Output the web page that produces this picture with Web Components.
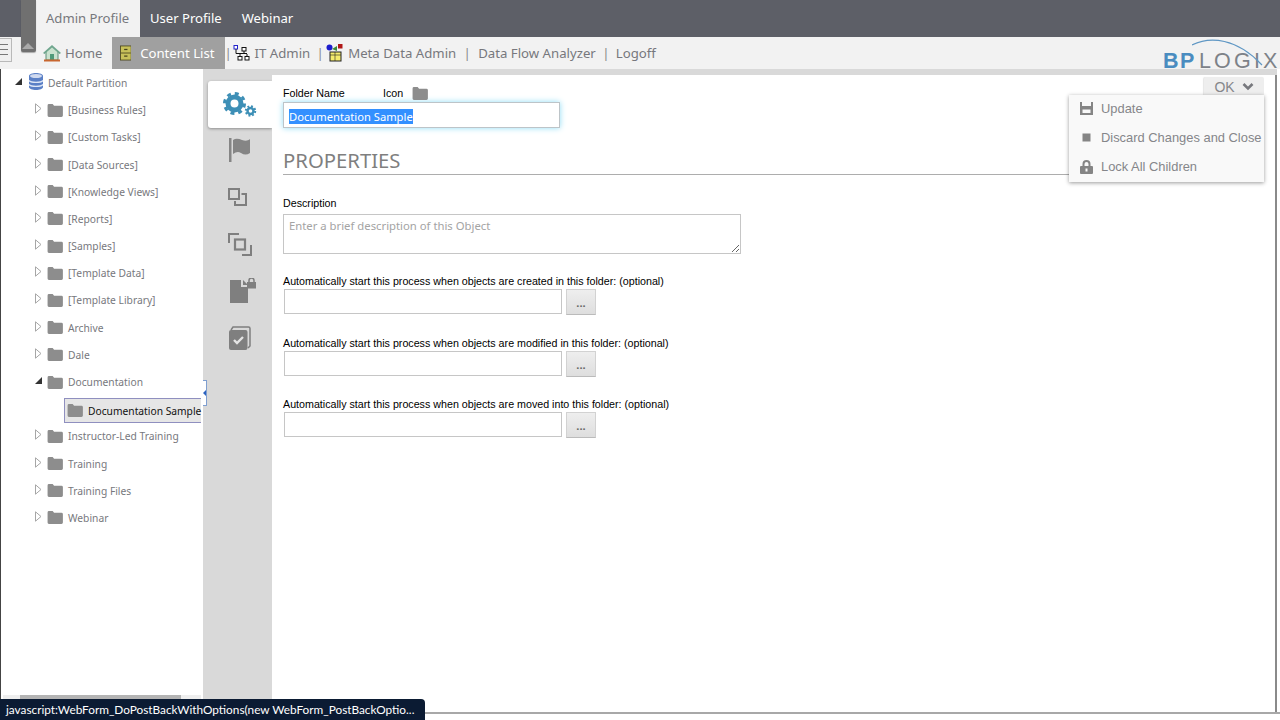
<!DOCTYPE html>
<html lang="en">
<head>
<meta charset="utf-8">
<title>Content List</title>
<style>
  html,body{margin:0;height:100%;background:#fff;overflow:hidden}
  body{font-family:"Noto Sans","Liberation Sans",sans-serif}
</style>
</head>
<body>
<app-shell></app-shell>
<script>
const UI = '"Noto Sans","Open Sans","Liberation Sans",sans-serif';
const folder = (w = 16, h = 13) => `<svg width="${w}" height="${h}" viewBox="0 0 17 14" style="display:block;flex:none"><path fill="#8d8d8d" d="M1.500 0h4.500l1.500 2h8a1.500 1.500 0 0 1 1.500 1.500v9a1.500 1.500 0 0 1-1.500 1.500h-13.500a1.500 1.500 0 0 1-1.500-1.500v-11a1.500 1.500 0 0 1 1.500-1.500z"/></svg>`;
const gear = (cx, cy, r, sw, tw) => {
  const R = r + sw / 2 + tw / 2 - .5, d = (2 * Math.PI * R) / 16;
  return `<circle cx="${cx}" cy="${cy}" r="${r}" fill="none" stroke="#3d8fb6" stroke-width="${sw}"/><circle cx="${cx}" cy="${cy}" r="${R}" fill="none" stroke="#3d8fb6" stroke-width="${tw}" stroke-dasharray="${d} ${d}"/>`;
};
const ICONS = {
  gears: `<svg width="34" height="26" viewBox="0 0 34 26">${gear(11.5, 12.5, 6.5, 5, 3)}${gear(27.5, 20, 3, 2.4, 2)}</svg>`,
  flag: `<svg width="22" height="24" viewBox="0 0 22 24"><rect x="0" y="0" width="2.500" height="24" fill="#858585"/><path fill="#858585" d="M4 2c3-2 6-1 9 0s6 1 8-1v14c-3 2-6 2-9 0s-5-1-8 1z"/></svg>`,
  one: `<svg width="19" height="18" viewBox="0 0 19 18" fill="none" stroke="#7f7f7f" stroke-width="2"><rect x="1" y="1" width="10" height="10"/><path d="M13.500 6h4.500v11h-11v-4"/></svg>`,
  many: `<svg width="24" height="23" viewBox="0 0 24 23" fill="none" stroke="#7f7f7f" stroke-width="2"><path d="M1 10v-9h10"/><rect x="7" y="6.500" width="10" height="10" stroke-width="2.200"/><path d="M14 22h9v-10"/></svg>`,
  doclock: `<svg width="26" height="25" viewBox="0 0 26 25"><path fill="#7f7f7f" d="M0 2h11v7h7v16h-18z"/><path fill="#7f7f7f" d="M13 2l5 5h-5z"/><rect x="17" y="4" width="9" height="6.500" fill="#7f7f7f"/><path fill="none" stroke="#7f7f7f" stroke-width="1.500" d="M19 4v-1.500a2.400 2.400 0 0 1 5 0v1.500"/></svg>`,
  check: `<svg width="22" height="24" viewBox="0 0 22 24"><path fill="none" stroke="#7f7f7f" stroke-width="1.500" d="M2 4l2-3h15.500a1.500 1.500 0 0 1 1.500 1.500v17.500l-2 2"/><rect x="0" y="4" width="18.500" height="20" rx="2" fill="#7f7f7f"/><path fill="none" stroke="#e4e4e4" stroke-width="2.400" d="M5 14l3 3 6-6"/></svg>`,
  save: `<svg width="13" height="13" viewBox="0 0 13 13"><path fill="#858585" fill-rule="evenodd" d="M0 0h2v4h9v-4h2v13h-13zM2.500 7.500v3.500h8v-3.500z"/></svg>`,
  stop: `<svg width="13" height="13" viewBox="0 0 13 13"><rect x="2.500" y="2.500" width="8" height="8" fill="#858585"/></svg>`,
  lock: `<svg width="13" height="14" viewBox="0 0 13 14"><path fill="#858585" fill-rule="evenodd" d="M1 6h11a1 1 0 0 1 1 1v6a1 1 0 0 1-1 1h-11a1 1 0 0 1-1-1v-6a1 1 0 0 1 1-1zM5.500 8.500v3h2v-3z"/><path fill="none" stroke="#858585" stroke-width="2" d="M3.500 6.500v-2.500a3 3 0 0 1 6 0v2.500"/></svg>`,
  home: `<svg width="18" height="17" viewBox="0 0 18 17"><path fill="#c9e2cf" stroke="#5f8f78" d="M3 7l6-6 6 6v8h-12z"/><path fill="#6fa68e" d="M0 8l9-8 9 8-1.500 1-7.500-6.500-7.500 6.500z"/><rect x="7" y="9" width="4" height="6" fill="#4f9a7a"/><rect x="1" y="14.500" width="16" height="2" fill="#c8662f"/></svg>`,
  cabinet: `<svg width="14" height="18" viewBox="0 0 14 18"><rect x=".5" y=".5" width="13" height="17" fill="#c7c05a" stroke="#47431c"/><path stroke="#47431c" d="M1 9h12"/><rect x="5" y="4" width="4" height="1.500" fill="#47431c"/><rect x="5" y="12" width="4" height="1.500" fill="#47431c"/></svg>`,
  org: `<svg width="17" height="16" viewBox="0 0 17 16" fill="#fff" stroke="#111"><rect x="1" y=".5" width="3.500" height="3.500" stroke="#2222cc"/><rect x="9" y="2.500" width="4" height="3.500"/><rect x="5" y="11.500" width="4" height="3.500"/><rect x="12" y="11.500" width="4" height="3.500"/><path fill="none" d="M3 4v4.500h8M11 6v3M7 9v2.500M14 9v2.500M7 8.500h7"/></svg>`,
  meta: `<svg width="17" height="18" viewBox="0 0 17 18"><rect x="4" y="8" width="11" height="9" fill="#f5ec6c" stroke="#222"/><path d="M4 11h11M9 8v9" stroke="#222" stroke-width=".6"/><circle cx="3.500" cy="3.500" r="3" fill="#1c1ccc"/><rect x="12" y="0" width="4.500" height="4.500" fill="#b01818"/><path d="M6 5l5-3v5z" fill="#3b8a3b"/></svg>`,
  db: `<svg width="14" height="17" viewBox="0 0 14 17"><path fill="#5b80c6" d="M0 3c0-4 14-4 14 0v11c0 4-14 4-14 0z"/><ellipse cx="7" cy="3" rx="6" ry="2" fill="#cfd9ef"/><path fill="none" stroke="#dfe7f6" stroke-width="1.300" d="M0 7.500c2 2.500 12 2.500 14 0M0 11.500c2 2.500 12 2.500 14 0"/></svg>`
};

class BaseEl extends HTMLElement {
  constructor() { super(); this.attachShadow({ mode: "open" }); }
}

class TopTabs extends BaseEl {
  connectedCallback() {
    this.shadowRoot.innerHTML = `<style>
      :host{display:flex;height:37px;background:#5d5f67;padding-left:36px;font:13.100px/37px ${UI};white-space:nowrap}
      span{padding:0 10px;color:#fff}
      .on{background:#f2f2f2;color:#77787d;width:84px}
    </style><span class="on">Admin Profile</span><span>User Profile</span><span>Webinar</span>`;
  }
}

class NavBar extends BaseEl {
  connectedCallback() {
    this.shadowRoot.innerHTML = `<style>
      :host{display:flex;align-items:center;height:32px;background:#f2f2f2;position:relative;font:13.200px ${UI};color:#77787d;white-space:nowrap}
      .burger{width:11px;height:22px;margin-top:-7px;border:1px solid #b9b9b9;border-left:0;flex:none;display:flex;flex-direction:column;justify-content:center;gap:4px;background:#efefef}
      .burger i{display:block;height:1px;background:#777;width:8px}
      .list{display:flex;align-items:center;height:100%;margin-left:31px}
      a{display:flex;align-items:center;gap:5px;height:100%}
      a.home{gap:4px}
      a.on{background:#a0a0a0;color:#fff;padding:0 10px 0 8px;gap:9px;margin-left:9px;width:95px}
      .sep{box-sizing:border-box;color:#888;text-align:center;width:22px}
      .sep.a{width:8px;text-align:left}
      .sep.b{width:16px;padding-left:4px}
      .sep.c{width:20px}
      .logo{position:absolute;right:0;top:8px;width:117px;height:24px;font:21.500px/32px "Liberation Sans",sans-serif;white-space:nowrap}
      .logo b{color:#4a8cc0;letter-spacing:1.500px}
      .logo span{color:#7d8288;margin-left:3px;letter-spacing:3.200px}
      .logo svg{position:absolute;left:29px;top:-8px}
    </style>
    <div class="burger"><i></i><i></i><i></i></div>
    <div class="list">
      <a class="home">${ICONS.home}Home</a>
      <a class="on">${ICONS.cabinet}Content List</a>
      <span class="sep a">|</span>
      <a>${ICONS.org}IT Admin</a>
      <span class="sep b">|</span>
      <a>${ICONS.meta}Meta Data Admin</a>
      <span class="sep">|</span>
      <a>Data Flow Analyzer</a>
      <span class="sep c">|</span>
      <a>Logoff</a>
    </div>
    <div class="logo"><b>BP</b><span>LOGIX</span><svg width="80" height="32" viewBox="0 0 80 32"><path d="M0 8C18-1 45 1 70 28" fill="none" stroke="#5f97c4" stroke-width="1.200"/></svg></div>`;
  }
}

class TreeNode extends BaseEl {
  connectedCallback() {
    const state = this.getAttribute("state") || "closed";
    const sel = this.hasAttribute("selected");
    const root = this.hasAttribute("root");
    const arrow = state === "open"
      ? `<svg width="9" height="9" viewBox="0 0 9 9"><path d="M8 1v7h-7z" fill="#333"/></svg>`
      : state === "closed"
        ? `<svg width="7" height="11" viewBox="0 0 7 11"><path d="M.5 .8l5.500 4.700-5.500 4.700z" fill="#fff" stroke="#a6a6a6"/></svg>` : "";
    this.shadowRoot.innerHTML = `<style>
      :host{display:block;box-sizing:border-box;height:27.200px;font:10.250px ${UI};color:#77787d;white-space:nowrap}
      :host([selected]){padding-top:2.500px}
      .row{display:flex;align-items:center;height:100%}
      .tw{width:11px;display:flex;justify-content:center;margin-top:-3px}
      .ic{margin:0 5px 0 ${root ? 5 : 3}px}
      .sel{box-sizing:border-box;height:25px;width:137px;margin-left:31px;border:1px solid #8f8fbf;border-right:0;background:#e6e6e6;color:#111;padding-left:2px}
      .sel .ic{margin:0 5px 0 0}
    </style><div class="row ${sel ? "sel" : ""}"><span class="tw" ${sel ? 'style="display:none"' : ""}>${arrow}</span><span class="ic">${root ? ICONS.db : folder()}</span><span>${this.getAttribute("label")}</span></div>`;
  }
}

class TreeView extends BaseEl {
  connectedCallback() {
    this.shadowRoot.innerHTML = `<style>
      :host{display:block;box-sizing:border-box;width:203px;background:#fff;border-left:1px solid #444;padding:.4px 0 0 12px;position:relative;overflow:hidden}
      .bar{position:absolute;left:2px;right:2px;bottom:12px;height:5px;background:#eee}
      .bar i{display:block;margin-left:17px;width:161px;height:100%;background:#b4b4b4}
    </style><slot></slot><div class="bar"><i></i></div>`;
  }
}

class SideRail extends BaseEl {
  connectedCallback() {
    // [icon, nudge x, nudge y] inside its 47px cell
    const icons = [["gears", 0, 3], ["flag", 0, 2], ["one", -5, 1], ["many", 0, 2], ["doclock", 6, 0], ["check", -1, 1]];
    this.shadowRoot.innerHTML = `<style>
      :host{display:flex;flex-direction:column;align-items:flex-end;width:69px;background:#d9d9d9;padding-top:12px;position:relative;flex:none}
      div{width:64px;height:47px;display:flex;align-items:center;justify-content:center;box-sizing:border-box}
      .on{background:#fff;border-radius:3px 0 0 3px;box-shadow:0 1px 3px rgba(0,0,0,.35)}
      .grip{position:absolute;left:0;top:311px;width:4px;height:26px;padding:0;background:#fff;border:1px solid #7f9fd0;border-left:0;justify-content:flex-start}
      .grip:after{content:"";border:3px solid transparent;border-right-color:#2b62c0;margin-left:-3px}
    </style>${icons.map(([n, dx, dy], i) => `<div class="${i ? "" : "on"}"><span style="display:block;margin:${dy}px 0 0 ${dx}px">${ICONS[n]}</span></div>`).join("")}<div class="grip"></div>`;
  }
}

class ProcessField extends BaseEl {
  connectedCallback() {
    this.shadowRoot.innerHTML = `<style>
      :host{display:block;font:10.700px "Liberation Sans",sans-serif;color:#000}
      label{display:block;margin-left:-1px;height:14px;line-height:14px}
      .f{display:flex;gap:4px;margin-top:1px}
      .box{width:278px;height:25px;box-sizing:border-box;border:1px solid #c6c6c6;background:#fff}
      .btn{width:30px;height:26px;box-sizing:border-box;background:linear-gradient(#eee,#dedede);border:1px solid #d2d2d2;border-bottom-color:#bbb;color:#666;text-align:center;font:700 11px/26px ${UI}}
    </style><label><slot></slot></label><div class="f"><div class="box"></div><div class="btn">...</div></div>`;
  }
}

class FolderForm extends BaseEl {
  connectedCallback() {
    this.shadowRoot.innerHTML = `<style>
      :host{display:block;flex:1;background:#fff;position:relative;border-right:2px solid #8a8a8a;padding:10px 0 0 11px;min-width:0;box-sizing:border-box;font:10.700px "Liberation Sans",sans-serif;color:#000}
      .top{display:flex;align-items:center;height:15px}
      .top span:nth-child(1){width:100px}
      .top span:nth-child(2){width:29px}
      .top svg{margin-top:1px}
      .name{box-sizing:border-box;width:277px;height:26px;margin-top:2px;border:1px solid #bdc4c8;box-shadow:0 0 6px #8fdcf5;padding:6px 0 0 5px;font:11.200px/16px ${UI};background:#fff;white-space:nowrap}
      .name span{background:#3390ff;color:#fff;display:inline-block;height:15px;line-height:15px}
      h2{margin:19px 0 0;font:400 20.300px/26px ${UI};color:#7f7f7f;height:26px;border-bottom:1px solid #adadad;padding-bottom:1px;margin-right:11px}
      .d{margin-top:21px;height:14px;line-height:14px}
      .ta{box-sizing:border-box;position:relative;margin-top:4px;width:458px;height:40px;border:1px solid #c6c6c6;padding:3px 5px;font:11.300px/15px ${UI};color:#a4a4a4}
      .ta svg{position:absolute;right:0;bottom:0}
      process-field{margin-left:1px}
      .p1{margin-top:20px}
      .p2{margin-top:21px}
      .p3{margin-top:20px}
    </style>
    <div class="top"><span>Folder Name</span><span>Icon</span>${folder()}</div>
    <div class="name"><span>Documentation Sample</span></div>
    <h2>PROPERTIES</h2>
    <div class="d">Description</div>
    <div class="ta">Enter a brief description of this Object<svg width="9" height="9" viewBox="0 0 9 9"><path d="M1 8l7-7M5 8l3-3" stroke="#666" fill="none"/></svg></div>
    <process-field class="p1">Automatically start this process when objects are created in this folder: (optional)</process-field>
    <process-field class="p2">Automatically start this process when objects are modified in this folder: (optional)</process-field>
    <process-field class="p3">Automatically start this process when objects are moved into this folder: (optional)</process-field>
    <action-menu></action-menu>`;
  }
}

class ActionMenu extends BaseEl {
  connectedCallback() {
    const rows = [["save", "Update"], ["stop", "Discard Changes and Close"], ["lock", "Lock All Children"]];
    this.shadowRoot.innerHTML = `<style>
      :host{position:absolute;right:11px;top:2px;width:195px;color:#85868a}
      .ok{box-sizing:border-box;padding-top:1px;margin-left:135px;width:60px;height:18px;background:#eee;border-radius:2px 2px 0 0;box-shadow:-1px 0 1px rgba(0,0,0,.1);display:flex;align-items:center;justify-content:center;gap:7px;font:14px "Liberation Sans",sans-serif}
      .menu{background:#f9f9f9;box-shadow:0 1px 4px rgba(0,0,0,.4);height:87px;box-sizing:border-box;padding-left:11px}
      .r{display:flex;align-items:center;height:29px;gap:8px;white-space:nowrap;font:12.900px "Liberation Sans",sans-serif;position:relative;top:-1px}
      .r svg{flex:none}
    </style><div class="ok">OK<svg width="12" height="9" viewBox="0 0 12 9"><path d="M1.500 2l4.500 4.500 4.500-4.500" fill="none" stroke="#77787d" stroke-width="2.600"/></svg></div>
    <div class="menu">${rows.map(([i, t]) => `<div class="r">${ICONS[i]}<span>${t}</span></div>`).join("")}</div>`;
  }
}

class StatusTip extends BaseEl {
  connectedCallback() {
    this.shadowRoot.innerHTML = `<style>
      :host{position:absolute;left:0;bottom:0;width:425px;height:21px;box-sizing:border-box;background:#0b1b33;color:#fff;border-radius:0 4px 0 0;padding-left:6px;font:11.800px/21px "Lato",sans-serif;white-space:nowrap}
    </style><slot></slot>`;
  }
}

class AppShell extends BaseEl {
  connectedCallback() {
    const names = ["[Business Rules]", "[Custom Tasks]", "[Data Sources]", "[Knowledge Views]", "[Reports]", "[Samples]", "[Template Data]", "[Template Library]", "Archive", "Dale"];
    const after = ["Instructor-Led Training", "Training", "Training Files", "Webinar"];
    const node = (l) => `<tree-node class="sub" label="${l}"></tree-node>`;
    this.shadowRoot.innerHTML = `<style>
      :host{display:flex;flex-direction:column;height:720px;position:relative;overflow:hidden;background:#fff}
      .body{display:flex;height:643px;border-bottom:2px solid #a8a8a8}
      .cols{flex:1;display:flex;min-width:0;margin-right:3px}
      .content{flex:1;display:flex;flex-direction:column;min-width:0}
      .strip{height:6px;background:#d9d9d9}
      .grip{position:absolute;left:21px;top:0;width:15px;height:52px;background:#707070;border-radius:0 0 2px 2px;box-shadow:0 1px 1px rgba(0,0,0,.3)}
      .grip:after{content:"";position:absolute;left:1px;bottom:3px;border:6px solid transparent;border-bottom-color:#a9a9a9;border-top:0;border-left-width:6.500px;border-right-width:6.500px}
      tree-node.sub{margin-left:20px}
    </style>
    <top-tabs></top-tabs>
    <nav-bar></nav-bar>
    <div class="body">
      <tree-view>
        <tree-node root state="open" label="Default Partition"></tree-node>
        ${names.map(node).join("")}
        <tree-node class="sub" state="open" label="Documentation"></tree-node>
        <tree-node class="sub" state="leaf" selected label="Documentation Sample"></tree-node>
        ${after.map(node).join("")}
      </tree-view>
      <div class="cols">
        <side-rail></side-rail>
        <div class="content"><div class="strip"></div><folder-form></folder-form></div>
      </div>
    </div>
    <div class="grip"></div>
    <status-tip>javascript:WebForm_DoPostBackWithOptions(new WebForm_PostBackOptio...</status-tip>`;
  }
}

customElements.define("top-tabs", TopTabs);
customElements.define("nav-bar", NavBar);
customElements.define("tree-node", TreeNode);
customElements.define("tree-view", TreeView);
customElements.define("side-rail", SideRail);
customElements.define("process-field", ProcessField);
customElements.define("folder-form", FolderForm);
customElements.define("action-menu", ActionMenu);
customElements.define("status-tip", StatusTip);
customElements.define("app-shell", AppShell);
</script>
</body>
</html>
